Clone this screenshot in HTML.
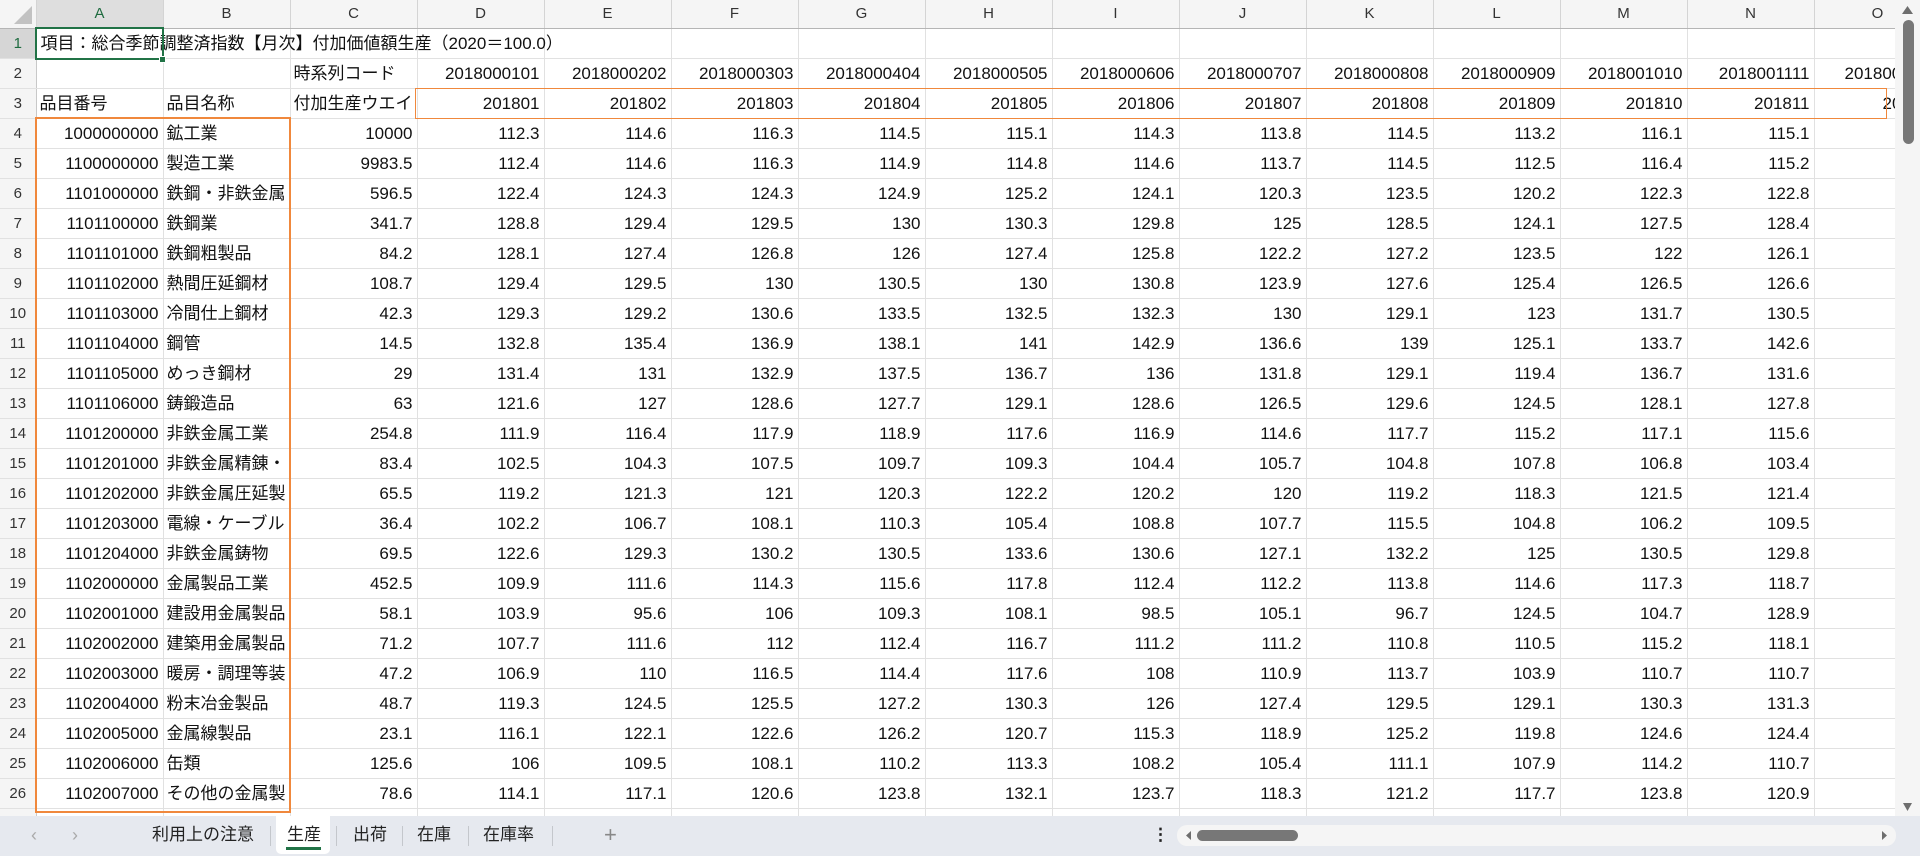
<!DOCTYPE html>
<html><head><meta charset="utf-8"><style>
*{margin:0;padding:0;box-sizing:border-box}
body{width:1920px;height:856px;overflow:hidden;background:#fff;font-family:"Liberation Sans","Noto Sans CJK JP",sans-serif;font-size:17px;color:#111;position:relative}
#grid{position:absolute;left:0;top:0;width:1895px;height:816px;overflow:hidden}
table{border-collapse:collapse;table-layout:fixed;width:1941px}
td{height:30px;border-right:1px solid #e1e1e1;border-bottom:1px solid #e1e1e1;white-space:nowrap;overflow:hidden;text-align:right;padding:0 4px 0 3px;line-height:29px}
td.t{text-align:left}
td.rh{background:#f5f5f5;text-align:center;font-size:15px;color:#333;border-right:1px solid #c8c8c8;padding:0}
tr.ch td{height:28px;background:#f5f5f5;text-align:center;font-size:15px;color:#333;border-bottom:1px solid #b5b5b5;border-right:1px solid #d4d4d4;padding:0;line-height:27px}
tr.ch td.sel{background:#dedede;color:#1e6b3f;border-bottom:2px solid #217346}
td.rsel{background:#d6d6d6 !important;color:#1e6b3f !important}
.ov{overflow:visible}
#tabs{position:absolute;left:0;top:816px;width:1920px;height:40px;background:#e6e9ef}
.tab{position:absolute;top:0;font-family:"Liberation Sans","Noto Sans CJK JP",sans-serif;font-size:17px;line-height:38px;color:#222}
.sep{position:absolute;top:10px;width:1px;height:20px;background:#c4c7cc}
</style></head><body>
<div id="grid">
<table>
<colgroup><col style="width:36px"><col span="14" style="width:127px"><col style="width:127px"></colgroup>
<tr class="ch"><td style="position:relative"><svg width="36" height="28" style="position:absolute;left:0;top:0"><polygon points="32,6 32,24 14,24" fill="#c2c2c2"/></svg></td><td class="sel">A</td><td>B</td><td>C</td><td>D</td><td>E</td><td>F</td><td>G</td><td>H</td><td>I</td><td>J</td><td>K</td><td>L</td><td>M</td><td>N</td><td>O</td></tr>
<tr><td class="rh rsel">1</td><td class="t" style="overflow:visible;position:relative"><span style="position:absolute;left:4px;top:0;background:transparent">項目：総合季節調整済指数【月次】付加価値額生産（2020＝100.0）</span></td><td></td><td></td><td></td><td></td><td></td><td></td><td></td><td></td><td></td><td></td><td></td><td></td><td></td><td></td></tr>
<tr><td class="rh">2</td><td></td><td></td><td class="t">時系列コード</td><td>2018000101</td><td>2018000202</td><td>2018000303</td><td>2018000404</td><td>2018000505</td><td>2018000606</td><td>2018000707</td><td>2018000808</td><td>2018000909</td><td>2018001010</td><td>2018001111</td><td style="text-align:left;padding-left:30px">2018001212</td></tr>
<tr><td class="rh">3</td><td class="t">品目番号</td><td class="t">品目名称</td><td class="t">付加生産ウエイト</td><td>201801</td><td>201802</td><td>201803</td><td>201804</td><td>201805</td><td>201806</td><td>201807</td><td>201808</td><td>201809</td><td>201810</td><td>201811</td><td style="text-align:left;padding-left:68px">201812</td></tr>
<tr><td class="rh">4</td><td>1000000000</td><td class="t">鉱工業</td><td>10000</td><td>112.3</td><td>114.6</td><td>116.3</td><td>114.5</td><td>115.1</td><td>114.3</td><td>113.8</td><td>114.5</td><td>113.2</td><td>116.1</td><td>115.1</td><td></td></tr>
<tr><td class="rh">5</td><td>1100000000</td><td class="t">製造工業</td><td>9983.5</td><td>112.4</td><td>114.6</td><td>116.3</td><td>114.9</td><td>114.8</td><td>114.6</td><td>113.7</td><td>114.5</td><td>112.5</td><td>116.4</td><td>115.2</td><td></td></tr>
<tr><td class="rh">6</td><td>1101000000</td><td class="t">鉄鋼・非鉄金属</td><td>596.5</td><td>122.4</td><td>124.3</td><td>124.3</td><td>124.9</td><td>125.2</td><td>124.1</td><td>120.3</td><td>123.5</td><td>120.2</td><td>122.3</td><td>122.8</td><td></td></tr>
<tr><td class="rh">7</td><td>1101100000</td><td class="t">鉄鋼業</td><td>341.7</td><td>128.8</td><td>129.4</td><td>129.5</td><td>130</td><td>130.3</td><td>129.8</td><td>125</td><td>128.5</td><td>124.1</td><td>127.5</td><td>128.4</td><td></td></tr>
<tr><td class="rh">8</td><td>1101101000</td><td class="t">鉄鋼粗製品</td><td>84.2</td><td>128.1</td><td>127.4</td><td>126.8</td><td>126</td><td>127.4</td><td>125.8</td><td>122.2</td><td>127.2</td><td>123.5</td><td>122</td><td>126.1</td><td></td></tr>
<tr><td class="rh">9</td><td>1101102000</td><td class="t">熱間圧延鋼材</td><td>108.7</td><td>129.4</td><td>129.5</td><td>130</td><td>130.5</td><td>130</td><td>130.8</td><td>123.9</td><td>127.6</td><td>125.4</td><td>126.5</td><td>126.6</td><td></td></tr>
<tr><td class="rh">10</td><td>1101103000</td><td class="t">冷間仕上鋼材</td><td>42.3</td><td>129.3</td><td>129.2</td><td>130.6</td><td>133.5</td><td>132.5</td><td>132.3</td><td>130</td><td>129.1</td><td>123</td><td>131.7</td><td>130.5</td><td></td></tr>
<tr><td class="rh">11</td><td>1101104000</td><td class="t">鋼管</td><td>14.5</td><td>132.8</td><td>135.4</td><td>136.9</td><td>138.1</td><td>141</td><td>142.9</td><td>136.6</td><td>139</td><td>125.1</td><td>133.7</td><td>142.6</td><td></td></tr>
<tr><td class="rh">12</td><td>1101105000</td><td class="t">めっき鋼材</td><td>29</td><td>131.4</td><td>131</td><td>132.9</td><td>137.5</td><td>136.7</td><td>136</td><td>131.8</td><td>129.1</td><td>119.4</td><td>136.7</td><td>131.6</td><td></td></tr>
<tr><td class="rh">13</td><td>1101106000</td><td class="t">鋳鍛造品</td><td>63</td><td>121.6</td><td>127</td><td>128.6</td><td>127.7</td><td>129.1</td><td>128.6</td><td>126.5</td><td>129.6</td><td>124.5</td><td>128.1</td><td>127.8</td><td></td></tr>
<tr><td class="rh">14</td><td>1101200000</td><td class="t">非鉄金属工業</td><td>254.8</td><td>111.9</td><td>116.4</td><td>117.9</td><td>118.9</td><td>117.6</td><td>116.9</td><td>114.6</td><td>117.7</td><td>115.2</td><td>117.1</td><td>115.6</td><td></td></tr>
<tr><td class="rh">15</td><td>1101201000</td><td class="t">非鉄金属精錬・</td><td>83.4</td><td>102.5</td><td>104.3</td><td>107.5</td><td>109.7</td><td>109.3</td><td>104.4</td><td>105.7</td><td>104.8</td><td>107.8</td><td>106.8</td><td>103.4</td><td></td></tr>
<tr><td class="rh">16</td><td>1101202000</td><td class="t">非鉄金属圧延製</td><td>65.5</td><td>119.2</td><td>121.3</td><td>121</td><td>120.3</td><td>122.2</td><td>120.2</td><td>120</td><td>119.2</td><td>118.3</td><td>121.5</td><td>121.4</td><td></td></tr>
<tr><td class="rh">17</td><td>1101203000</td><td class="t">電線・ケーブル</td><td>36.4</td><td>102.2</td><td>106.7</td><td>108.1</td><td>110.3</td><td>105.4</td><td>108.8</td><td>107.7</td><td>115.5</td><td>104.8</td><td>106.2</td><td>109.5</td><td></td></tr>
<tr><td class="rh">18</td><td>1101204000</td><td class="t">非鉄金属鋳物</td><td>69.5</td><td>122.6</td><td>129.3</td><td>130.2</td><td>130.5</td><td>133.6</td><td>130.6</td><td>127.1</td><td>132.2</td><td>125</td><td>130.5</td><td>129.8</td><td></td></tr>
<tr><td class="rh">19</td><td>1102000000</td><td class="t">金属製品工業</td><td>452.5</td><td>109.9</td><td>111.6</td><td>114.3</td><td>115.6</td><td>117.8</td><td>112.4</td><td>112.2</td><td>113.8</td><td>114.6</td><td>117.3</td><td>118.7</td><td></td></tr>
<tr><td class="rh">20</td><td>1102001000</td><td class="t">建設用金属製品</td><td>58.1</td><td>103.9</td><td>95.6</td><td>106</td><td>109.3</td><td>108.1</td><td>98.5</td><td>105.1</td><td>96.7</td><td>124.5</td><td>104.7</td><td>128.9</td><td></td></tr>
<tr><td class="rh">21</td><td>1102002000</td><td class="t">建築用金属製品</td><td>71.2</td><td>107.7</td><td>111.6</td><td>112</td><td>112.4</td><td>116.7</td><td>111.2</td><td>111.2</td><td>110.8</td><td>110.5</td><td>115.2</td><td>118.1</td><td></td></tr>
<tr><td class="rh">22</td><td>1102003000</td><td class="t">暖房・調理等装</td><td>47.2</td><td>106.9</td><td>110</td><td>116.5</td><td>114.4</td><td>117.6</td><td>108</td><td>110.9</td><td>113.7</td><td>103.9</td><td>110.7</td><td>110.7</td><td></td></tr>
<tr><td class="rh">23</td><td>1102004000</td><td class="t">粉末冶金製品</td><td>48.7</td><td>119.3</td><td>124.5</td><td>125.5</td><td>127.2</td><td>130.3</td><td>126</td><td>127.4</td><td>129.5</td><td>129.1</td><td>130.3</td><td>131.3</td><td></td></tr>
<tr><td class="rh">24</td><td>1102005000</td><td class="t">金属線製品</td><td>23.1</td><td>116.1</td><td>122.1</td><td>122.6</td><td>126.2</td><td>120.7</td><td>115.3</td><td>118.9</td><td>125.2</td><td>119.8</td><td>124.6</td><td>124.4</td><td></td></tr>
<tr><td class="rh">25</td><td>1102006000</td><td class="t">缶類</td><td>125.6</td><td>106</td><td>109.5</td><td>108.1</td><td>110.2</td><td>113.3</td><td>108.2</td><td>105.4</td><td>111.1</td><td>107.9</td><td>114.2</td><td>110.7</td><td></td></tr>
<tr><td class="rh">26</td><td>1102007000</td><td class="t">その他の金属製</td><td>78.6</td><td>114.1</td><td>117.1</td><td>120.6</td><td>123.8</td><td>132.1</td><td>123.7</td><td>118.3</td><td>121.2</td><td>117.7</td><td>123.8</td><td>120.9</td><td></td></tr>
<tr><td class="rh">27</td><td></td><td></td><td></td><td></td><td></td><td></td><td></td><td></td><td></td><td></td><td></td><td></td><td></td><td></td><td></td></tr>
</table>
<div style="position:absolute;left:35px;top:27px;width:129px;height:33px;border:2px solid #217346"></div>
<div style="position:absolute;left:159px;top:56px;width:7px;height:7px;background:#217346;border:1px solid #fff"></div>
<div style="position:absolute;left:35px;top:117px;width:256px;height:696px;border:2px solid #f0883c"></div>
<div style="position:absolute;left:415px;top:88px;width:1472px;height:31px;border:1.5px solid #f0883c"></div>
</div>
<!-- vertical scrollbar -->
<div style="position:absolute;left:1895px;top:0;width:25px;height:816px;background:#f5f5f5">
<svg width="25" height="816" style="position:absolute;left:0;top:0"><polygon points="7,14 18,14 12.5,6" fill="#6e6e6e"/><rect x="8" y="20" width="11" height="124" rx="5.5" fill="#777"/><polygon points="8,803 17,803 12.5,811" fill="#6e6e6e"/></svg>
</div>
<div id="tabs">
<span class="tab" style="left:31px;color:#aaa;font-size:18px">&#x2039;</span>
<span class="tab" style="left:72px;color:#aaa;font-size:18px">&#x203A;</span>
<span class="tab" style="left:152px">利用上の注意</span>
<div class="sep" style="left:270px"></div>
<div style="position:absolute;left:276px;top:0;width:54px;height:38px;background:#fff;border-radius:0 0 5px 5px"></div>
<span class="tab" style="left:287px">生産</span>
<div style="position:absolute;left:286px;top:31px;width:35px;height:3px;background:#217346"></div>
<div class="sep" style="left:336px"></div>
<span class="tab" style="left:353px">出荷</span>
<div class="sep" style="left:402px"></div>
<span class="tab" style="left:417px">在庫</span>
<div class="sep" style="left:468px"></div>
<span class="tab" style="left:483px">在庫率</span>
<div class="sep" style="left:552px"></div>
<span class="tab" style="left:604px;color:#888;font-size:22px">+</span>
<span class="tab" style="left:1152px;font-weight:bold">&#x22EE;</span>
<div style="position:absolute;left:1177px;top:9px;width:719px;height:21px;background:#f5f5f5;border-radius:10px">
<svg width="719" height="21" style="position:absolute;left:0;top:0"><polygon points="9,10.5 14,6 14,15" fill="#6e6e6e"/><rect x="20" y="5" width="101" height="11" rx="5.5" fill="#777"/><polygon points="710,10.5 705,6 705,15" fill="#6e6e6e"/></svg>
</div>
</div>
</body></html>
